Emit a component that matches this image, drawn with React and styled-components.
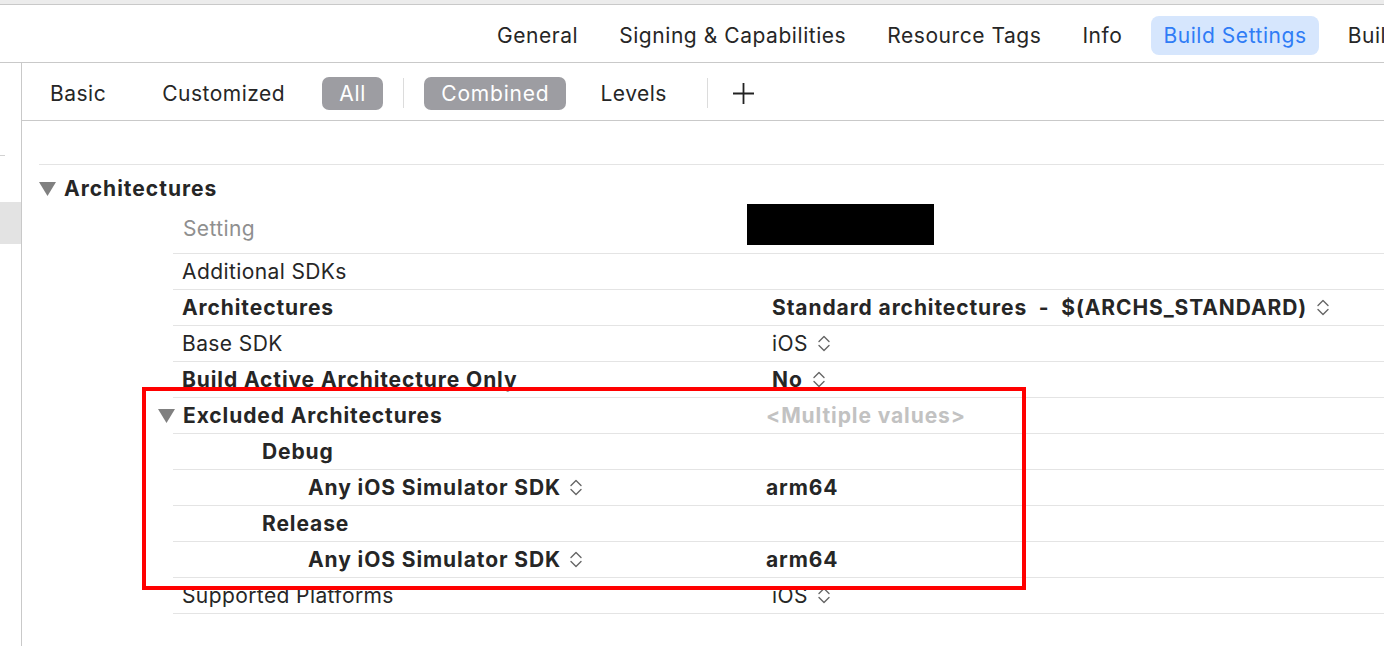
import React from "react";
import styled, { createGlobalStyle } from "styled-components";

const GlobalStyle = createGlobalStyle`
  html, body { margin: 0; padding: 0; background: #fff; }
  body {
    font-family: Inter, "Noto Sans", "Liberation Sans", sans-serif;
    color: #262626;
    -webkit-font-smoothing: antialiased;
  }
  * { box-sizing: border-box; }
`;

const Window = styled.div`
  position: relative;
  width: 1384px;
  height: 646px;
  display: flex;
  flex-direction: column;
  overflow: hidden;
  background: #fff;
`;

const TopStrip = styled.div`
  flex-shrink: 0;
  height: 5px;
  background: #ececec;
  border-bottom: 1px solid #c9c9c9;
`;

const TabBar = styled.nav`
  flex-shrink: 0;
  height: 58px;
  display: flex;
  align-items: center;
  gap: 17px;
  padding: 3px 0 0 485px;
  border-bottom: 1px solid #c9c9c9;
  white-space: nowrap;
  overflow: hidden;
`;

const Tab = styled.div`
  flex-shrink: 0;
  height: 39px;
  line-height: 39px;
  padding: 0 12px;
  border-radius: 8px;
  font-size: 21px;
  letter-spacing: 0.55px;
  color: ${(p) => (p.$active ? "#2f7cf6" : "#262626")};
  background: ${(p) => (p.$active ? "#d6e6fd" : "transparent")};
`;

const Body = styled.div`
  flex: 1;
  display: flex;
  min-height: 0;
`;

const Sidebar = styled.aside`
  flex-shrink: 0;
  width: 22px;
  border-right: 1px solid #c9c9c9;
  display: flex;
  flex-direction: column;
`;

const SideTick = styled.div`
  margin-top: 92px;
  width: 5px;
  height: 1px;
  background: #d2d2d2;
`;

const SideSelection = styled.div`
  margin-top: 46px;
  width: 21px;
  height: 42px;
  background: #e3e3e3;
`;

const Main = styled.main`
  flex: 1;
  min-width: 0;
  display: flex;
  flex-direction: column;
`;

const FilterBar = styled.div`
  flex-shrink: 0;
  height: 58px;
  display: flex;
  align-items: center;
  gap: 20px;
  padding: 3px 0 0 14px;
  border-bottom: 1px solid #c9c9c9;
`;

const FilterGroup = styled.div`
  display: flex;
  align-items: center;
  gap: 28px;
  margin-right: 3px;
`;

const FilterItem = styled.div`
  height: 33px;
  line-height: 33px;
  padding: ${(p) => (p.$active ? "0 17px" : "0 14px")};
  border-radius: 7px;
  font-size: 21px;
  letter-spacing: ${(p) => (p.$active ? 0.8 : 0.5)}px;
  color: ${(p) => (p.$active ? "#ffffff" : "#262626")};
  background: ${(p) => (p.$active ? "#9d9da2" : "transparent")};
`;

const FilterDivider = styled.div`
  width: 1px;
  height: 30px;
  background: #dcdcdc;
  margin-left: ${(p) => p.$extra || 0}px;
`;

const PlusButton = styled.div`
  display: flex;
  align-items: center;
  margin-left: 4px;
`;

const Content = styled.div`
  flex: 1;
  padding: 43px 0 0 17px;
`;

const Section = styled.section`
  border-top: 1px solid #e4e4e4;
`;

const SectionHeader = styled.div`
  height: 39px;
  display: flex;
  align-items: flex-start;
  gap: 8px;
  padding-top: 12px;
  font-size: 21px;
  font-weight: 700;
  letter-spacing: 1px;
  line-height: 24px;
`;

const Disclosure = styled.svg`
  flex-shrink: 0;
  width: 17px;
  height: 14px;
  margin-top: ${(p) => p.$top || 0}px;
  margin-left: ${(p) => p.$left || 0}px;
`;

const Table = styled.div`
  margin-left: 134px;
`;

const ColumnHeader = styled.div`
  height: 50px;
  display: grid;
  grid-template-columns: 574px 1fr;
  align-items: start;
  border-bottom: 1px solid #e4e4e4;
`;

const HeaderLabel = styled.div`
  padding: 13px 0 0 10px;
  font-size: 21px;
  letter-spacing: 0.4px;
  line-height: 24px;
  color: #8f8f8f;
`;

const Redaction = styled.div`
  width: 187px;
  height: 41px;
  background: #000;
`;

const Row = styled.div`
  height: 36px;
  display: grid;
  grid-template-columns: 599px 1fr;
  align-items: center;
  border-bottom: 1px solid #e4e4e4;
  font-size: 21px;
  line-height: 24px;
`;

const Title = styled.div`
  display: flex;
  align-items: center;
  gap: 8px;
  padding-left: ${(p) => 9 + (p.$indent || 0)}px;
  font-weight: ${(p) => (p.$bold ? 700 : 400)};
  letter-spacing: ${(p) => (p.$bold ? 0.9 : 0.4)}px;
  white-space: nowrap;
`;

const Value = styled.div`
  display: flex;
  align-items: center;
  gap: 9px;
  margin-left: ${(p) => p.$shift || 0}px;
  font-weight: ${(p) => (p.$bold ? 700 : 400)};
  letter-spacing: ${(p) => (p.$bold ? 0.9 : 0.4)}px;
  color: ${(p) => (p.$muted ? "#c2c2c2" : "#262626")};
  white-space: pre;
`;

const Highlight = styled.div`
  position: absolute;
  left: 142px;
  top: 387px;
  width: 884px;
  height: 203px;
  border: 4px solid #ff0000;
  pointer-events: none;
`;

const Triangle = ({ top, left }) => (
  <Disclosure viewBox="0 0 17 14" $top={top} $left={left}>
    <path d="M0 0 H17 L8.5 14 Z" fill="#808080" />
  </Disclosure>
);

const Stepper = () => (
  <svg width="14" height="19" viewBox="0 0 14 19">
    <path
      d="M2 7.5 L7 2.5 L12 7.5 M2 11.5 L7 16.5 L12 11.5"
      fill="none"
      stroke="#666"
      strokeWidth="1.4"
      strokeLinecap="round"
      strokeLinejoin="round"
    />
  </svg>
);

const Plus = () => (
  <svg width="23" height="23" viewBox="0 0 23 23">
    <path d="M11.5 1 V22 M1 11.5 H22" stroke="#222" strokeWidth="1.8" />
  </svg>
);

const tabs = ["General", "Signing & Capabilities", "Resource Tags", "Info", "Build Settings", "Build Phases"];

const rows = [
  { title: "Additional SDKs" },
  { title: "Architectures", bold: true, value: "Standard architectures  -  $(ARCHS_STANDARD)", valueBold: true, stepper: true },
  { title: "Base SDK", value: "iOS", stepper: true },
  { title: "Build Active Architecture Only", bold: true, value: "No", valueBold: true, stepper: true },
  { title: "Excluded Architectures", bold: true, disclosure: true, value: "<Multiple values>", valueBold: true, muted: true, shift: -6 },
  { title: "Debug", bold: true, indent: 80 },
  { title: "Any iOS Simulator SDK", bold: true, indent: 126, titleStepper: true, value: "arm64", valueBold: true, shift: -6 },
  { title: "Release", bold: true, indent: 80 },
  { title: "Any iOS Simulator SDK", bold: true, indent: 126, titleStepper: true, value: "arm64", valueBold: true, shift: -6 },
  { title: "Supported Platforms", value: "iOS", stepper: true },
];

export default function App() {
  return (
    <Window>
      <GlobalStyle />
      <TopStrip />
      <TabBar>
        {tabs.map((t) => (
          <Tab key={t} $active={t === "Build Settings"}>
            {t}
          </Tab>
        ))}
      </TabBar>
      <Body>
        <Sidebar>
          <SideTick />
          <SideSelection />
        </Sidebar>
        <Main>
          <FilterBar>
            <FilterGroup>
              <FilterItem>Basic</FilterItem>
              <FilterItem>Customized</FilterItem>
            </FilterGroup>
            <FilterItem $active>All</FilterItem>
            <FilterDivider />
            <FilterItem $active>Combined</FilterItem>
            <FilterItem>Levels</FilterItem>
            <FilterDivider $extra={6} />
            <PlusButton>
              <Plus />
            </PlusButton>
          </FilterBar>
          <Content>
            <Section>
              <SectionHeader>
                <Triangle top={5} />
                Architectures
              </SectionHeader>
              <Table>
                <ColumnHeader>
                  <HeaderLabel>Setting</HeaderLabel>
                  <Redaction />
                </ColumnHeader>
                {rows.map((r, i) => (
                  <Row key={i}>
                    <Title $bold={r.bold} $indent={r.indent}>
                      {r.disclosure && <Triangle left={-24} />}
                      {r.title}
                      {r.titleStepper && <Stepper />}
                    </Title>
                    <Value $bold={r.valueBold} $muted={r.muted} $shift={r.shift}>
                      {r.value}
                      {r.stepper && <Stepper />}
                    </Value>
                  </Row>
                ))}
              </Table>
            </Section>
          </Content>
        </Main>
      </Body>
      <Highlight />
    </Window>
  );
}
